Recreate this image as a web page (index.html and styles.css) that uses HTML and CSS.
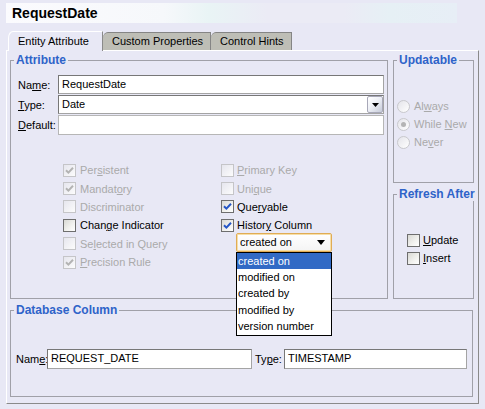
FILE: index.html
```html
<!DOCTYPE html>
<html>
<head>
<meta charset="utf-8">
<link rel="stylesheet" href="styles.css">
</head>
<body>
<div class="window">
  <div class="header">RequestDate</div>
  <div class="tabs">
    <div class="tab active">Entity Attribute</div>
    <div class="tab">Custom Properties</div>
    <div class="tab">Control Hints</div>
  </div>
  <div class="panel">
    <div class="top-row">
      <fieldset class="group attr">
        <legend>Attribute</legend>
        <div class="fields">
          <div class="field"><span class="lbl">Na<u>m</u>e:</span><div class="input">RequestDate</div></div>
          <div class="field"><span class="lbl"><u>T</u>ype:</span><div class="input select">Date<span class="drop-btn"><svg width="7" height="4" viewBox="0 0 7 4"><path d="M0 0H7L3.5 4Z" fill="#000"/></svg></span></div></div>
          <div class="field"><span class="lbl"><u>D</u>efault:</span><div class="input light"></div></div>
        </div>
        <div class="checks">
          <div class="check disabled"><span class="cb"><svg viewBox="0 0 11 11"><path d="M2 5.2L4.4 7.6L9 2.8"/></svg></span><span>Per<u>s</u>istent</span></div>
          <div class="check disabled"><span class="cb"></span><span><u>P</u>rimary Key</span></div>
          <div class="check disabled"><span class="cb"><svg viewBox="0 0 11 11"><path d="M2 5.2L4.4 7.6L9 2.8"/></svg></span><span>Mandat<u>o</u>ry</span></div>
          <div class="check disabled"><span class="cb"></span><span>Uni<u>q</u>ue</span></div>
          <div class="check disabled"><span class="cb"></span><span>Discriminator</span></div>
          <div class="check"><span class="cb"><svg viewBox="0 0 11 11"><path d="M2 5.2L4.4 7.6L9 2.8"/></svg></span><span>Que<u>r</u>yable</span></div>
          <div class="check"><span class="cb"></span><span>Chan<u>g</u>e Indicator</span></div>
          <div class="check"><span class="cb"><svg viewBox="0 0 11 11"><path d="M2 5.2L4.4 7.6L9 2.8"/></svg></span><span>Histor<u>y</u> Column</span></div>
          <div class="check disabled"><span class="cb"></span><span>Se<u>l</u>ected in Query</span></div>
          <div class="combo-cell">
            <div class="combo">created on<svg class="combo-arrow" width="8" height="5" viewBox="0 0 8 5"><path d="M0 0H8L4 5Z" fill="#000"/></svg>
              <div class="list">
                <div class="item selected">created on</div>
                <div class="item">modified on</div>
                <div class="item">created by</div>
                <div class="item">modified by</div>
                <div class="item">version number</div>
              </div>
            </div>
          </div>
          <div class="check disabled"><span class="cb"><svg viewBox="0 0 11 11"><path d="M2 5.2L4.4 7.6L9 2.8"/></svg></span><span><u>P</u>recision Rule</span></div>
        </div>
      </fieldset>
      <div class="side">
        <fieldset class="group updatable">
          <legend>Updatable</legend>
          <div class="radios">
            <div class="radio"><span class="rb"></span><span>Al<u>w</u>ays</span></div>
            <div class="radio"><span class="rb on"></span><span>While <u>N</u>ew</span></div>
            <div class="radio"><span class="rb"></span><span>Ne<u>v</u>er</span></div>
          </div>
        </fieldset>
        <fieldset class="group refresh">
          <legend>Refresh After</legend>
          <div class="refresh-checks">
            <div class="check"><span class="cb"></span><span><u>U</u>pdate</span></div>
            <div class="check"><span class="cb"></span><span><u>I</u>nsert</span></div>
          </div>
        </fieldset>
      </div>
    </div>
    <fieldset class="group dbcol">
      <legend>Database Column</legend>
      <div class="db-row">
        <span class="db-lbl name-lbl">Nam<u>e</u>:</span><div class="input db-name">REQUEST_DATE</div>
        <span class="db-lbl type-lbl">Ty<u>p</u>e:</span><div class="input db-type">TIMESTAMP</div>
      </div>
    </fieldset>
  </div>
</div>
</body>
</html>
```

FILE: styles.css
```css
* { box-sizing: border-box; }
html, body { margin: 0; padding: 0; }
body {
  background: #e8e8f5;
  font-family: "Liberation Sans", Arial, sans-serif;
  font-size: 11px;
  color: #000;
  width: 485px;
  height: 409px;
  overflow: hidden;
}
u { text-decoration: underline; text-underline-offset: 1px; }

.window { padding-top: 3px; }

.header {
  margin-left: 6px;
  width: 451px;
  height: 20px;
  padding-left: 6px;
  font-weight: bold;
  font-size: 14px;
  line-height: 20px;
  background: linear-gradient(to right, #fbfbfe 0%, #f6f8fb 35%, #e9f4f5 45%, #ebebf5 58%, #ebebf5 75%, #e6f0f5 85%, #e7eef6 100%);
}

.tabs {
  display: flex;
  align-items: flex-end;
  margin-left: 8px;
  margin-top: 8px;
  height: 19px;
  position: relative;
  z-index: 2;
}
.tab {
  height: 18px;
  line-height: 16px;
  padding-left: 9px;
  background: #bebeb6;
  border: 1px solid #858585;
  border-bottom: none;
  border-top-left-radius: 5px 6px;
  white-space: nowrap;
}
.tab:nth-child(2) { width: 108px; }
.tab:nth-child(3) { width: 81px; border-left: none; padding-left: 9px; }
.tab.active {
  width: 95px;
  height: 20px;
  margin-bottom: -1px;
  line-height: 18px;
  background: #e8e8f5;
  border-color: #ffffff #8a8a8a #fff #ffffff;
  border-top-left-radius: 5px 7px;
}
.tab.active + .tab { border-left: none; }

.panel {
  margin-left: 6px;
  width: 473px;
  height: 354px;
  border-top: 1px solid #ffffff;
  border-left: 1px solid #ffffff;
  border-right: 1px solid #8a8a8a;
  border-bottom: 1px solid #8a8a8a;
  padding: 2px 4px 0 3px;
  position: relative;
}

.top-row {
  display: flex;
  gap: 5px;
  height: 246px;
}

.group {
  margin: 0;
  padding: 0;
  min-width: 0;
  border: 1px solid #a0a0a8;
}
.group legend {
  font-weight: bold;
  font-size: 12px;
  line-height: 14px;
  color: #2e63c9;
  margin-left: 3px;
  padding: 0 2px;
  white-space: nowrap;
}

.attr { width: 378px; height: 246px; position: relative; }

.fields {
  display: flex;
  flex-direction: column;
  gap: 1px;
  padding: 8px 3px 0 7px;
}
.field { display: flex; align-items: center; height: 19px; }
.field:last-child { height: 20px; }
.lbl { width: 40px; }

.input {
  flex: 1;
  height: 100%;
  background: #fff;
  border: 1px solid;
  border-color: #777 #a4a4a4 #a4a4a4 #777;
  padding-left: 3px;
  line-height: 17px;
  white-space: nowrap;
  position: relative;
}
.input.light { border-color: #b6b6b6; }
.input.select { display: flex; justify-content: space-between; padding-right: 0; }
.drop-btn {
  width: 16px;
  height: 17px;
  border: 1px solid #a8a8b8;
  border-radius: 2px;
  background: linear-gradient(135deg, #ffffff 0%, #eef0f6 45%, #c6cad8 100%);
  display: flex;
  align-items: center;
  justify-content: center;
}

.checks {
  display: grid;
  grid-template-columns: 158px 1fr;
  grid-auto-rows: 18.4px;
  margin-top: 26px;
  padding-left: 52px;
}
.check {
  display: flex;
  align-items: center;
  gap: 4px;
  white-space: nowrap;
}
.check:nth-child(even) { gap: 3px; }
.cb {
  width: 13px;
  height: 13px;
  border: 1px solid #6e6e6e;
  background: linear-gradient(135deg, #d9d9d4 0%, #f2f2ef 60%, #ffffff 100%);
  display: flex;
  flex: none;
}
.cb svg { width: 11px; height: 11px; }
.cb path { fill: none; stroke: #2556c6; stroke-width: 2; }
.check.disabled { color: #aaaaaa; }
.check.disabled .cb {
  border-color: #c5c5c8;
  background: linear-gradient(135deg, #e6e6ee 0%, #f3f3f6 60%, #fcfcfc 100%);
}
.check.disabled .cb path { stroke: #b3b3b3; }

.combo-cell { position: relative; }
.combo {
  position: relative;
  margin-left: 15px;
  margin-top: -2px;
  width: 96px;
  height: 19px;
  border: 1px solid #e0ac55;
  border-radius: 2px;
  box-shadow: inset 0 0 0 1px #f7dfa8;
  background: linear-gradient(#ffffff, #f4f4f4);
  padding-left: 3px;
  line-height: 17px;
  z-index: 5;
}
.combo-arrow { position: absolute; right: 6px; top: 6px; }
.list {
  position: absolute;
  left: -1px;
  top: 18px;
  width: 96px;
  background: #fff;
  border: 1px solid #000;
  z-index: 6;
}
.item {
  height: 16.4px;
  line-height: 16px;
  padding-left: 1px;
  white-space: nowrap;
}
.item.selected { background: #316ac5; color: #fff; }

.side {
  width: 81px;
  display: flex;
  flex-direction: column;
  gap: 4px;
}
.updatable { height: 130px; }
.refresh { height: 112px; }

.radios {
  display: flex;
  flex-direction: column;
  padding: 30px 0 0 3px;
}
.radio {
  display: flex;
  align-items: center;
  gap: 4px;
  height: 18px;
  color: #aaaaaa;
  white-space: nowrap;
}
.rb {
  width: 13px;
  height: 13px;
  border-radius: 50%;
  border: 1px solid #c8c8cc;
  background: linear-gradient(135deg, #e4e4ea 0%, #f4f4f6 60%, #ffffff 100%);
  display: flex;
  align-items: center;
  justify-content: center;
  flex: none;
}
.rb.on::after {
  content: "";
  width: 5px;
  height: 5px;
  border-radius: 50%;
  background: #b4b4b4;
}

.refresh-checks {
  display: flex;
  flex-direction: column;
  padding: 30px 0 0 13px;
}
.refresh-checks .check { height: 18px; gap: 3px; }

.dbcol {
  margin-top: 4px;
  width: 463px;
  height: 94px;
}
.db-row {
  display: flex;
  align-items: center;
  height: 20px;
  margin-top: 32px;
  padding-left: 5px;
}
.db-lbl { white-space: nowrap; }
.name-lbl { width: 31px; }
.type-lbl { width: 29px; margin-left: 3px; }
.input.db-name { flex: none; width: 205px; }
.input.db-type { flex: none; width: 183px; }
```
